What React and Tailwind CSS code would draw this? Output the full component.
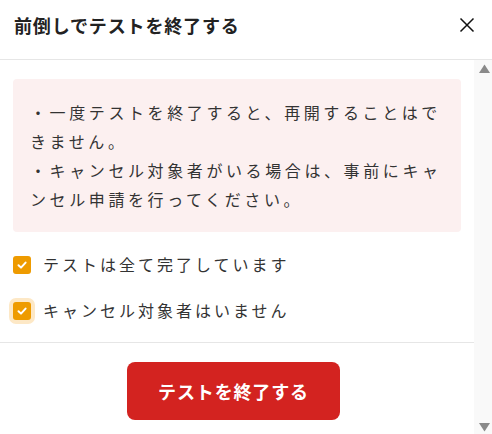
import React from "react";

const font = { fontFamily: '"Noto Sans CJK JP", "Noto Sans", sans-serif' };

function Check({ focus }) {
  return (
    <span
      className={
        "flex h-[18px] w-[18px] shrink-0 items-center justify-center rounded-[3px] bg-[#ee9b00] " +
        (focus ? "ring-4 ring-[#fde8c6]" : "")
      }
    >
      <svg width="12" height="12" viewBox="0 0 12 12" fill="none">
        <path d="M2.5 6.2 L5 8.6 L9.6 3.6" stroke="white" strokeWidth="2" strokeLinecap="round" strokeLinejoin="round" />
      </svg>
    </span>
  );
}

export default function App() {
  return (
    <div className="flex h-[434px] w-[492px] flex-col overflow-hidden bg-white text-[#222]" style={font}>
      <div className="flex h-[60px] shrink-0 items-start justify-between border-b border-[#e6e6e6] pl-[14px] pr-[17px] pt-[14px]">
        <h1 className="text-[18px] font-bold leading-[22px] tracking-[0.85px] text-[#222]">前倒しでテストを終了する</h1>
        <svg width="16" height="16" viewBox="0 0 16 16" className="mt-[3px]" fill="none">
          <path d="M1.5 1.5 L14.5 14.5 M14.5 1.5 L1.5 14.5" stroke="#111" strokeWidth="1.5" />
        </svg>
      </div>
      <div className="flex min-h-0 flex-1">
        <div className="min-w-0 flex-1">
          <div className="px-[13px] pt-[19px]">
            <div className="rounded-[4px] bg-[#fcf0f0] pl-[17px] pr-[12px] pt-[19px] pb-[18px] text-[16px] leading-[29px] tracking-[3.6px] text-[#333]">
              <p>
                ・一度テストを終了すると、再開することはで
                <br />
                きません。
              </p>
              <p>
                ・キャンセル対象者がいる場合は、事前にキャ
                <br />
                ンセル申請を行ってください。
              </p>
            </div>
            <div className="mt-[23px] flex flex-col gap-[27px] text-[16px] leading-[19px] tracking-[3px] text-[#333]">
              <label className="flex items-center gap-[12px]">
                <Check />
                <span>テストは全て完了しています</span>
              </label>
              <label className="flex items-center gap-[12px]">
                <Check focus />
                <span>キャンセル対象者はいません</span>
              </label>
            </div>
          </div>
          <div className="mt-[22px] flex justify-center border-t border-[#e6e6e6] pt-[19px] pr-[7px]">
            <button className="h-[58px] w-[213px] rounded-[8px] bg-[#d32320] text-[18px] font-bold tracking-[0.85px] text-white">
              テストを終了する
            </button>
          </div>
        </div>
        <div className="flex w-[18px] shrink-0 flex-col justify-between bg-[#f9f9f9] pb-[2px] pl-[5px] pt-[4px]">
          <svg width="11" height="9" viewBox="0 0 11 9">
            <path d="M5.5 0.5 L11 9 L0 9 Z" fill="#8a8a8a" />
          </svg>
          <svg width="11" height="9" viewBox="0 0 11 9">
            <path d="M0 0 L11 0 L5.5 8.5 Z" fill="#8a8a8a" />
          </svg>
        </div>
      </div>
    </div>
  );
}
